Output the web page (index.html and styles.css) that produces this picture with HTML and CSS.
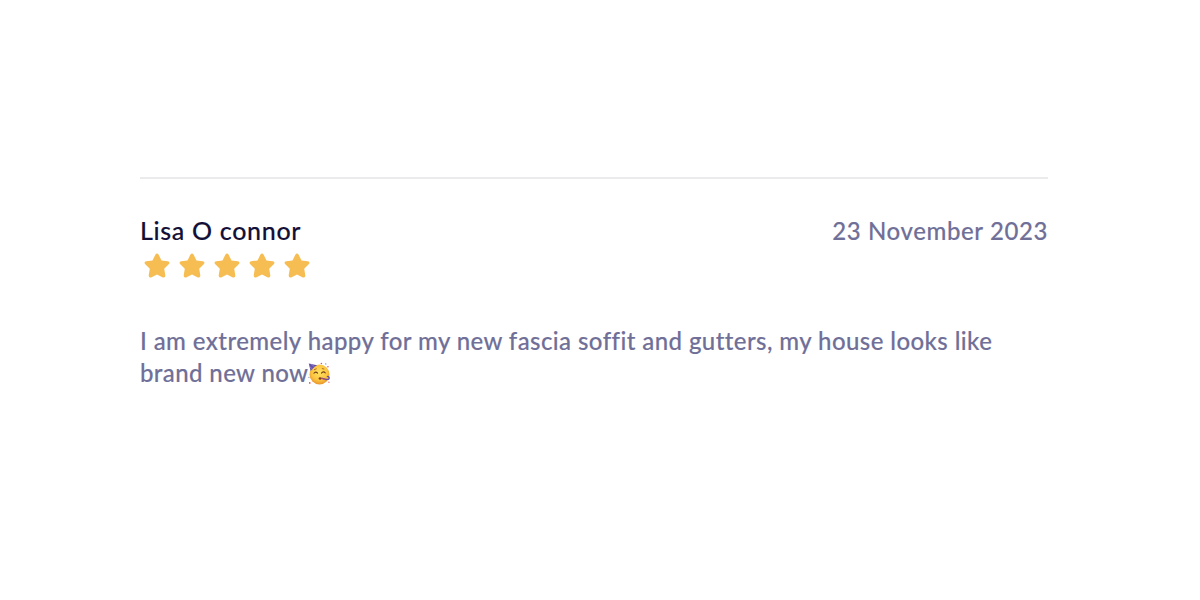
FILE: index.html
```html
<!DOCTYPE html>
<html lang="en">
<head>
    <meta charset="UTF-8">
    <meta name="viewport" content="width=device-width, initial-scale=1.0">
    <title>Customer review</title>
    <link rel="stylesheet" href="styles.css">
</head>
<body>
    <!-- star shape shared by the rating -->
    <svg class="defs" width="0" height="0" aria-hidden="true">
        <symbol id="star" viewBox="0 0 26 26">
            <path d="M11.3 1.8Q13 -.9 14.7 1.8L17.5 7.4L23.8 8.3Q26.6 9 24.7 11.3L20.2 15.8L21.3 22.2Q21.5 25.3 18.8 24.4L13 21.6L7.2 24.4Q4.5 25.3 4.7 22.2L5.8 15.8L1.3 11.3Q-.6 9 2.2 8.3L8.5 7.4Z"/>
        </symbol>
    </svg>
    <article class="review">
        <header class="review-header">
            <h2 class="name">Lisa O connor</h2>
            <span class="date">23 November 2023</span>
        </header>
        <div class="stars" role="img" aria-label="5 stars">
            <svg><use href="#star"/></svg>
            <svg><use href="#star"/></svg>
            <svg><use href="#star"/></svg>
            <svg><use href="#star"/></svg>
            <svg><use href="#star"/></svg>
        </div>
        <p class="comment">
            <span class="line first">I am extremely happy for my new fascia soffit and gutters, my house looks like</span>
            <span class="line second">brand new now<svg class="party" viewBox="0 0 24 24" role="img" aria-label="party face">
                <defs>
                    <radialGradient id="skin" cx=".5" cy=".4" r=".6">
                        <stop offset="0" stop-color="#ffe263"/>
                        <stop offset=".65" stop-color="#fbc540"/>
                        <stop offset="1" stop-color="#e9942c"/>
                    </radialGradient>
                </defs>
                <circle cx="12" cy="13" r="10.4" fill="url(#skin)"/>
                <path d="M.8 1.5L9.6 3.4Q5.5 5 2.7 9.4Z" fill="#6552a5"/>
                <path d="M3 2L6.8 5M2 5L4.5 7.2" stroke="#9b83d1" stroke-width=".8"/>
                <path d="M6.2 11.8Q8 9.4 10 11.6M14 11.6Q16 9.2 18 11.3" fill="none" stroke="#70401c" stroke-width="1.1" stroke-linecap="round"/>
                <path d="M6.2 8.2L9 7M14.5 6.8L17 7.4" stroke="#a85d20" stroke-width=".9"/>
                <ellipse cx="12.6" cy="17.2" rx="1.5" ry="1.4" fill="#853d24"/>
                <path d="M14 17L20 18.4Q22.8 18 21.8 15.6Q20.8 14.4 20 15.6" fill="none" stroke="#6850a0" stroke-width="1.5"/>
                <path d="M14.5 17L18.5 18.8" stroke="#c64b65" stroke-width=".8"/>
                <g fill="#e35363">
                    <circle cx="14" cy="1.6" r=".8"/>
                    <circle cx="20.8" cy="5" r=".8"/>
                    <circle cx="1.8" cy="21.8" r=".9"/>
                    <circle cx="21.8" cy="21" r=".7"/>
                </g>
                <g fill="#668bc8">
                    <circle cx="18.5" cy="2" r=".7"/>
                    <circle cx="1" cy="16" r=".6"/>
                </g>
            </svg></span>
        </p>
    </article>
</body>
</html>
```
FILE: styles.css
```css
* {
    margin: 0;
    padding: 0;
    box-sizing: border-box;
}
body {
    background-color: #fff;
    font-family: Lato, "Liberation Sans", sans-serif;
    font-weight: 500;
    font-size: 24px;
    color: #706f98;
    -webkit-text-stroke: .15px currentColor;
}
.defs {
    display: block;
}
.review {
    width: 908px;
    margin: 177px 0 0 140px;
    border-top: 2px solid #ebebed;
    padding-top: 36px;
}
.review-header {
    display: flex;
    justify-content: space-between;
    height: 32px;
    line-height: 32px;
}
.name {
    font-size: 25px;
    font-weight: 500;
    line-height: 30px;
    letter-spacing: .68px;
    color: #130f37;
}
.date {
    letter-spacing: .6px;
}
.stars {
    display: flex;
    gap: 9px;
    margin: 6px 0 0 4px;
}
.stars svg {
    width: 26px;
    height: 26px;
    fill: #f6bd53;
    stroke: none;
}
.comment {
    margin-top: 45px;
}
.line {
    display: block;
    white-space: nowrap;
}
.first {
    line-height: 33px;
    letter-spacing: .42px;
}
.second {
    line-height: 31px;
    letter-spacing: .38px;
}
.party {
    width: 23px;
    height: 23px;
    vertical-align: -3px;
}
```
